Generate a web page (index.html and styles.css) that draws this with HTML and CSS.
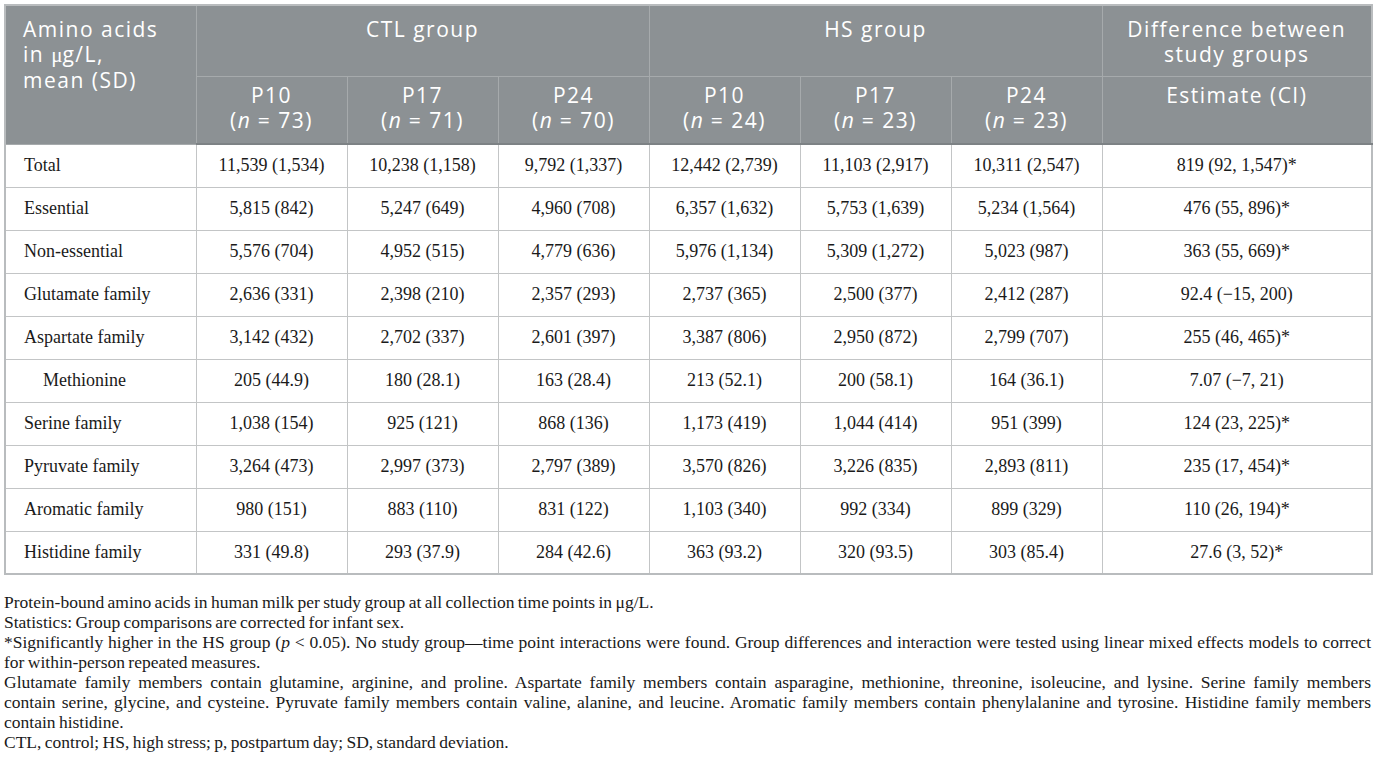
FILE: index.html
```html
<!DOCTYPE html>
<html lang="en">
<head>
<meta charset="utf-8">
<title>Protein-bound amino acids in human milk</title>
<link rel="stylesheet" href="styles.css">
</head>
<body>
<div class="page">
  <table class="data">
    <colgroup>
      <col class="c-label">
      <col class="c-num"><col class="c-num"><col class="c-num">
      <col class="c-num"><col class="c-num"><col class="c-num">
      <col class="c-diff">
    </colgroup>
    <thead>
      <tr class="h1">
        <th rowspan="2" class="th-label">Amino acids in <span class="mu">μ</span>g/L, mean (SD)</th>
        <th colspan="3">CTL group</th>
        <th colspan="3">HS group</th>
        <th>Difference between study groups</th>
      </tr>
      <tr class="h2">
        <th>P10<br>(<i>n</i> = 73)</th>
        <th>P17<br>(<i>n</i> = 71)</th>
        <th>P24<br>(<i>n</i> = 70)</th>
        <th>P10<br>(<i>n</i> = 24)</th>
        <th>P17<br>(<i>n</i> = 23)</th>
        <th>P24<br>(<i>n</i> = 23)</th>
        <th>Estimate (CI)</th>
      </tr>
    </thead>
    <tbody>
      <tr><td>Total</td><td>11,539 (1,534)</td><td>10,238 (1,158)</td><td>9,792 (1,337)</td><td>12,442 (2,739)</td><td>11,103 (2,917)</td><td>10,311 (2,547)</td><td>819 (92, 1,547)*</td></tr>
      <tr><td>Essential</td><td>5,815 (842)</td><td>5,247 (649)</td><td>4,960 (708)</td><td>6,357 (1,632)</td><td>5,753 (1,639)</td><td>5,234 (1,564)</td><td>476 (55, 896)*</td></tr>
      <tr><td>Non-essential</td><td>5,576 (704)</td><td>4,952 (515)</td><td>4,779 (636)</td><td>5,976 (1,134)</td><td>5,309 (1,272)</td><td>5,023 (987)</td><td>363 (55, 669)*</td></tr>
      <tr><td>Glutamate family</td><td>2,636 (331)</td><td>2,398 (210)</td><td>2,357 (293)</td><td>2,737 (365)</td><td>2,500 (377)</td><td>2,412 (287)</td><td>92.4 (−15, 200)</td></tr>
      <tr><td>Aspartate family</td><td>3,142 (432)</td><td>2,702 (337)</td><td>2,601 (397)</td><td>3,387 (806)</td><td>2,950 (872)</td><td>2,799 (707)</td><td>255 (46, 465)*</td></tr>
      <tr><td class="sub">Methionine</td><td>205 (44.9)</td><td>180 (28.1)</td><td>163 (28.4)</td><td>213 (52.1)</td><td>200 (58.1)</td><td>164 (36.1)</td><td>7.07 (−7, 21)</td></tr>
      <tr><td>Serine family</td><td>1,038 (154)</td><td>925 (121)</td><td>868 (136)</td><td>1,173 (419)</td><td>1,044 (414)</td><td>951 (399)</td><td>124 (23, 225)*</td></tr>
      <tr><td>Pyruvate family</td><td>3,264 (473)</td><td>2,997 (373)</td><td>2,797 (389)</td><td>3,570 (826)</td><td>3,226 (835)</td><td>2,893 (811)</td><td>235 (17, 454)*</td></tr>
      <tr><td>Aromatic family</td><td>980 (151)</td><td>883 (110)</td><td>831 (122)</td><td>1,103 (340)</td><td>992 (334)</td><td>899 (329)</td><td>110 (26, 194)*</td></tr>
      <tr><td>Histidine family</td><td>331 (49.8)</td><td>293 (37.9)</td><td>284 (42.6)</td><td>363 (93.2)</td><td>320 (93.5)</td><td>303 (85.4)</td><td>27.6 (3, 52)*</td></tr>
    </tbody>
  </table>
  <div class="notes">
    <p>Protein-bound amino acids in human milk per study group at all collection time points in μg/L.</p>
    <p>Statistics: Group comparisons are corrected for infant sex.</p>
    <p><span class="full">*Significantly higher in the HS group (<i>p</i> &lt; 0.05). No study group—time point interactions were found. Group differences and interaction were tested using linear mixed effects models to correct</span><span>for within-person repeated measures.</span></p>
    <p><span class="full">Glutamate family members contain glutamine, arginine, and proline. Aspartate family members contain asparagine, methionine, threonine, isoleucine, and lysine. Serine family members</span><span class="full">contain serine, glycine, and cysteine. Pyruvate family members contain valine, alanine, and leucine. Aromatic family members contain phenylalanine and tyrosine. Histidine family members</span><span>contain histidine.</span></p>
    <p>CTL, control; HS, high stress; p, postpartum day; SD, standard deviation.</p>
  </div>
</div>
</body>
</html>
```

FILE: styles.css
```css
html, body {
  margin: 0;
  padding: 0;
  background: #ffffff;
}

.page {
  padding: 4px 4px 0 4px;
  width: 1367px;
}

.data {
  width: 1367px;
  border-collapse: collapse;
  table-layout: fixed;
  border: 2px solid #b9bcbe;
}

.c-label { width: 191px; }
.c-num { width: 151px; }
.c-diff { width: 270px; }

.data th {
  background: #8c9194;
  color: #ffffff;
  font-family: "Open Sans", "DejaVu Sans", sans-serif;
  font-weight: 400;
  font-size: 21px;
  letter-spacing: 1.5px;
  line-height: 25px;
  text-align: center;
  vertical-align: top;
  border: 1px solid #a6aaac;
  padding: 0 6px;
}

.data th i {
  letter-spacing: 1px;
}

.data .h1 th {
  height: 71px;
  padding-top: 11px;
  box-sizing: border-box;
}

.data .h2 th {
  height: 68px;
  padding-top: 6px;
  box-sizing: border-box;
  border-bottom: 2px solid #7d8285;
}

.data .th-label {
  text-align: left;
  padding-left: 17px;
  padding-right: 26px;
}

.mu {
  font-family: "Liberation Serif", serif;
  letter-spacing: 0;
}

.data td {
  font-family: "Liberation Serif", "Times New Roman", serif;
  font-size: 18px;
  color: #1a1a1a;
  height: 43px;
  box-sizing: border-box;
  padding: 0 6px;
  text-align: center;
  vertical-align: middle;
  border: 1px solid #c3c5c6;
}

.data td:first-child {
  text-align: left;
  padding-left: 18px;
}

.data td.sub {
  padding-left: 37px;
}

.notes {
  margin-top: 17px;
  font-family: "Liberation Serif", "Times New Roman", serif;
  font-size: 17.5px;
  word-spacing: -1px;
  line-height: 20px;
  color: #1a1a1a;
}

.notes p {
  margin: 0;
}

.notes span {
  display: block;
}

.notes .full {
  text-align: justify;
  text-align-last: justify;
}
```
